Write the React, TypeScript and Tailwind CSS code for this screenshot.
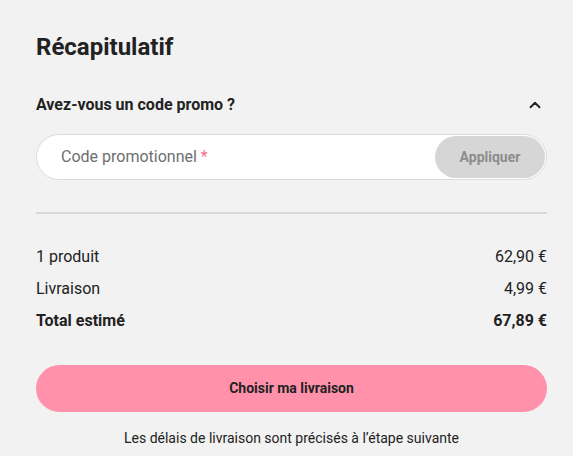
import { ChevronUp } from 'lucide-react';

export default function App() {
  return (
    <div className="min-h-[456px] w-[573px] bg-[#f2f2f2] pl-9 pr-[26px] pt-[31px] text-[#222] font-['Roboto',sans-serif]">
      <h2 className="text-[24px] font-bold leading-8">Récapitulatif</h2>

      <div className="mt-[30px] flex h-6 items-center justify-between">
        <span className="text-[16px] font-bold leading-6">Avez-vous un code promo ?</span>
        <ChevronUp className="mr-[3px] h-[18px] w-[18px] text-[#222]" strokeWidth={2.5} />
      </div>

      <div className="mt-[17px] flex h-[46px] items-center rounded-full border border-[#dcdcdc] bg-white pl-6 pr-[1px]">
        <span className="flex-1 text-[16px] text-[#6e6e6e]">
          Code promotionnel <span className="text-[#f0708f]">*</span>
        </span>
        <button className="h-[42px] w-[110px] rounded-full bg-[#d6d6d6] text-[14px] font-bold text-[#8c8c8c]">
          Appliquer
        </button>
      </div>

      <div className="mt-[32px] h-[2px] bg-[#d8d8d8]" />

      <div className="mt-[27px] flex flex-col text-[16px]">
        <div className="flex h-8 items-center justify-between">
          <span>1 produit</span>
          <span>62,90 €</span>
        </div>
        <div className="flex h-8 items-center justify-between">
          <span>Livraison</span>
          <span>4,99 €</span>
        </div>
        <div className="flex h-8 items-center justify-between font-bold">
          <span>Total estimé</span>
          <span>67,89 €</span>
        </div>
      </div>

      <button className="mt-[28px] flex h-[47px] w-full items-center justify-center rounded-full bg-[#ff91ab] text-[14px] font-bold text-[#222]">
        Choisir ma livraison
      </button>

      <p className="mt-[16px] text-center text-[14px] leading-5">
        Les délais de livraison sont précisés à l’étape suivante
      </p>
    </div>
  );
}
